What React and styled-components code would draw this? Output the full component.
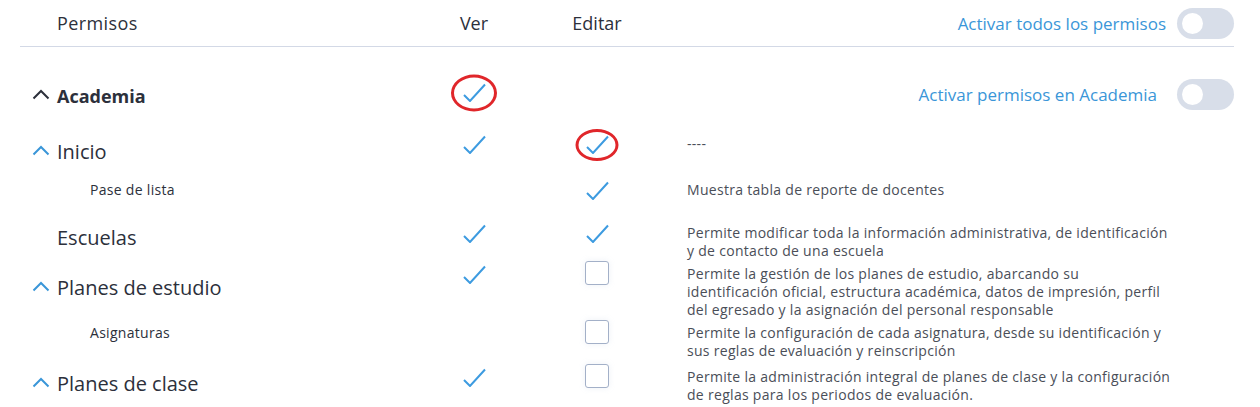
import React from "react";
import styled, { createGlobalStyle } from "styled-components";

const GlobalStyle = createGlobalStyle`
  body {
    margin: 0;
    background: #fff;
    font-family: "Open Sans", "Noto Sans", sans-serif;
    color: #2c303b;
  }
`;

const BLUE = "#3a96d8";

const rows = [
  { name: "Inicio", chevron: true, ver: true, edit: "check", editCircled: true, minH: 41, desc: ["----"] },
  { name: "Pase de lista", sub: true, edit: "check", minH: 38, desc: ["Muestra tabla de reporte de docentes"] },
  {
    name: "Escuelas",
    ver: true,
    edit: "check",
    desc: [
      "Permite modificar toda la información administrativa, de identificación",
      "y de contacto de una escuela",
    ],
  },
  {
    name: "Planes de estudio",
    chevron: true,
    ver: true,
    edit: "box",
    desc: [
      "Permite la gestión de los planes de estudio, abarcando su",
      "identificación oficial, estructura académica, datos de impresión, perfil",
      "del egresado y la asignación del personal responsable",
    ],
  },
  {
    name: "Asignaturas",
    sub: true,
    edit: "box",
    minH: 39,
    desc: [
      "Permite la configuración de cada asignatura, desde su identificación y",
      "sus reglas de evaluación y reinscripción",
    ],
  },
  {
    name: "Planes de clase",
    chevron: true,
    ver: true,
    edit: "box",
    minH: 40,
    desc: [
      "Permite la administración integral de planes de clase y la configuración",
      "de reglas para los periodos de evaluación.",
    ],
  },
];

const Chevron = ({ color }) => (
  <svg width="18" height="11" viewBox="0 0 18 11" fill="none">
    <path d="M1.5 9.5 L9 2 L16.5 9.5" stroke={color} strokeWidth="2" />
  </svg>
);

const Check = () => (
  <svg width="23" height="19" viewBox="0 0 23 19" fill="none">
    <path d="M1 12 L7 18 L22 1.5" stroke="#3d9be0" strokeWidth="2" />
  </svg>
);

const App = () => (
  <>
    <GlobalStyle />
    <Panel>
      <Header>
        <HeaderTitle>Permisos</HeaderTitle>
        <ColTitle>Ver</ColTitle>
        <ColTitle>Editar</ColTitle>
        <ToggleWrap>
          <ToggleLabel>Activar todos los permisos</ToggleLabel>
          <Toggle />
        </ToggleWrap>
      </Header>

      <Section>
        <SectionNameCell>
          <ChevronSlot>
            <Chevron color="#2c303b" />
          </ChevronSlot>
          <SectionName>Academia</SectionName>
        </SectionNameCell>
        <SectionMark $circled="big">
          <Check />
        </SectionMark>
        <span />
        <ToggleWrap $gap={20}>
          <ToggleLabel>Activar permisos en Academia</ToggleLabel>
          <Toggle />
        </ToggleWrap>
      </Section>

      <List>
        {rows.map((r) => (
          <Row key={r.name} $minH={r.minH}>
            <NameCell $sub={r.sub}>
              {!r.sub && <ChevronSlot>{r.chevron && <Chevron color={BLUE} />}</ChevronSlot>}
              <ItemName $sub={r.sub}>{r.name}</ItemName>
            </NameCell>
            <Mark>{r.ver && <Check />}</Mark>
            <Mark $circled={r.editCircled ? "small" : undefined}>
              {r.edit === "check" ? <Check /> : <Box />}
            </Mark>
            <Desc>
              {r.desc.map((line, i) => (
                <div key={i}>{line}</div>
              ))}
            </Desc>
          </Row>
        ))}
      </List>
    </Panel>
  </>
);

export default App;

const Panel = styled.div`
  margin: 0 26px 0 20px;
`;

const grid = `
  display: grid;
  grid-template-columns: 394px 120px 126px 1fr;
`;

const Header = styled.div`
  ${grid}
  align-items: center;
  height: 46px;
  border-bottom: 1px solid #d3d9e6;
`;

const HeaderTitle = styled.div`
  padding-left: 37px;
  font-size: 18px;
  letter-spacing: 0.4px;
  color: #2c303b;
`;

const ColTitle = styled.div`
  text-align: center;
  font-size: 18px;
  color: #2c303b;
`;

const ToggleWrap = styled.div`
  display: flex;
  align-items: center;
  justify-content: flex-end;
  gap: ${(p) => p.$gap || 11}px;
`;

const ToggleLabel = styled.span`
  font-size: 17px;
  color: ${BLUE};
`;

const Toggle = styled.span`
  position: relative;
  display: block;
  width: 57px;
  height: 31px;
  border-radius: 16px;
  background: #d8dee9;
  flex-shrink: 0;

  &::after {
    content: "";
    position: absolute;
    left: 5px;
    top: 5px;
    width: 21px;
    height: 21px;
    border-radius: 50%;
    background: #fff;
  }
`;

const Section = styled.div`
  ${grid}
  align-items: center;
  height: 56px;
  margin-top: 19px;
`;

const NameCell = styled.div`
  display: flex;
  align-items: center;
  padding-left: ${(p) => (p.$sub ? 70 : 12)}px;
  align-self: ${(p) => (p.$sub ? "start" : "center")};
  margin-bottom: ${(p) => (p.$sub ? 0 : 8)}px;
`;

const SectionNameCell = styled(NameCell)`
  margin: 4px 0 0;
`;

const ChevronSlot = styled.span`
  display: flex;
  width: 25px;
  margin-top: -3px;
`;

const SectionName = styled.span`
  font-size: 18px;
  font-weight: 700;
  color: #2c303b;
`;

const ItemName = styled.span`
  font-size: ${(p) => (p.$sub ? 14 : 20)}px;
  line-height: ${(p) => (p.$sub ? 18 : 28)}px;
  letter-spacing: ${(p) => (p.$sub ? 0.3 : 0)}px;
  color: #2c303b;
`;

const List = styled.div`
  display: flex;
  flex-direction: column;
  gap: 5px;
  margin-top: 13px;
`;

const Row = styled.div`
  ${grid}
  align-items: start;
  min-height: ${(p) => p.$minH || 36}px;
`;

const ellipse = {
  big: { w: 40, h: 31 },
  small: { w: 37, h: 26 },
};

const Mark = styled.div`
  position: relative;
  display: flex;
  justify-content: center;
  align-items: flex-start;
  height: 18px;

  ${(p) =>
    p.$circled &&
    `
    &::after {
      content: "";
      position: absolute;
      left: 50%;
      top: 10px;
      width: ${ellipse[p.$circled].w}px;
      height: ${ellipse[p.$circled].h}px;
      transform: translate(-50%, -50%);
      border: 3px solid #e0262a;
      border-radius: 50%;
    }
  `}
`;

const SectionMark = styled(Mark)`
  align-self: center;
  margin-bottom: 5px;
`;

const Box = styled.span`
  display: block;
  width: 22px;
  height: 22px;
  margin-top: -4px;
  border: 1px solid #a3b0c8;
  border-radius: 3px;
  background: #fff;
  box-shadow: 0 0 6px rgba(160, 176, 210, 0.18);
`;

const Desc = styled.div`
  padding-left: 27px;
  font-size: 14px;
  line-height: 18px;
  letter-spacing: 0.3px;
  color: #4a4e58;
  white-space: nowrap;
`;
